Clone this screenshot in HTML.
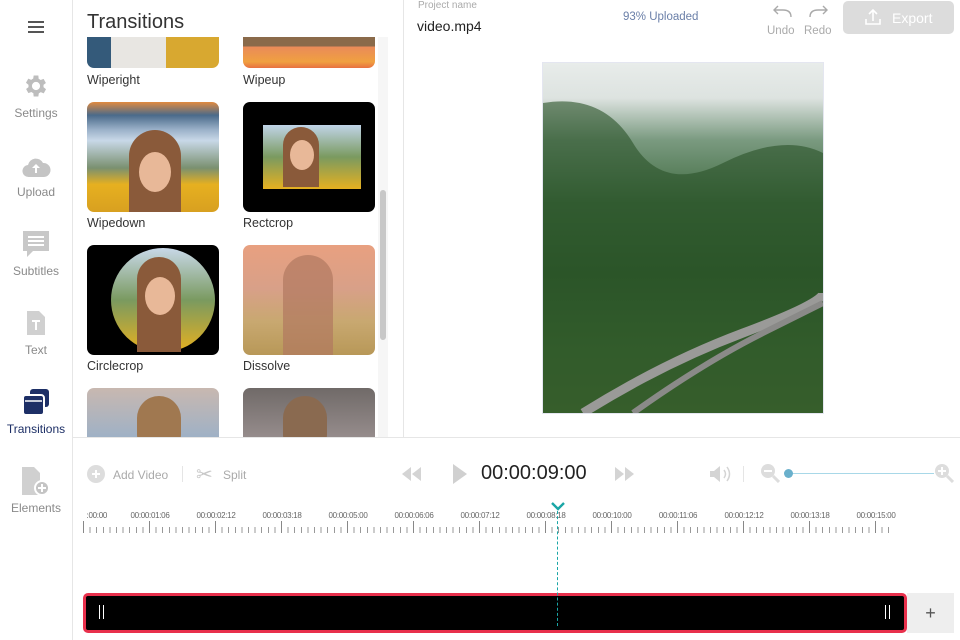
<!DOCTYPE html>
<html><head><meta charset="utf-8"><style>
*{margin:0;padding:0;box-sizing:border-box}
body{width:960px;height:640px;overflow:hidden;background:#fff;font-family:"Liberation Sans",sans-serif;position:relative;color:#222}
.abs{position:absolute}
.side{left:0;top:0;width:73px;height:640px;border-right:1px solid #e6e6e6;background:#fff}
.si{position:absolute;left:0;width:72px;text-align:center;font-size:12px;color:#8a8a8a}
.thumb{position:absolute;width:132px;height:110px;border-radius:7px;overflow:hidden}
.lbl{position:absolute;font-size:12.5px;color:#333}
.tl{position:absolute;top:511px;font-size:8px;color:#666;width:60px;text-align:center;letter-spacing:-0.3px}
</style></head><body>
<div class="abs side">
 <div class="abs" style="left:28px;top:21px;width:16px;height:2px;background:#555;box-shadow:0 5px 0 #555,0 10px 0 #555"></div>
 <svg class="abs" style="left:22px;top:72px" width="28" height="28" viewBox="0 0 24 24"><path fill="#bdbdbd" d="M19.4 13a7.5 7.5 0 000-2l2.1-1.6-2-3.5-2.5 1a7 7 0 00-1.7-1L15 3h-4l-.4 2.7a7 7 0 00-1.7 1l-2.5-1-2 3.5L6.6 11a7.5 7.5 0 000 2l-2.1 1.6 2 3.5 2.5-1a7 7 0 001.7 1L11 21h4l.4-2.7a7 7 0 001.7-1l2.5 1 2-3.5zM13 15.5a3.5 3.5 0 110-7 3.5 3.5 0 010 7z" transform="translate(-1 0)"/></svg>
 <div class="si" style="top:106px">Settings</div>
 <svg class="abs" style="left:21px;top:155px" width="30" height="24" viewBox="0 0 30 24"><path fill="#c4c4c4" d="M8 22a6 6 0 01-1-12 8 8 0 0115-2 6.5 6.5 0 011 14z"/><path fill="#fff" d="M15 9l-4 4h3v5h2v-5h3z"/></svg>
 <div class="si" style="top:185px">Upload</div>
 <svg class="abs" style="left:21px;top:229px" width="30" height="30" viewBox="0 0 30 30"><path fill="#c8c8c8" d="M2 2h26v20H12l-6 6v-6H2z"/><path stroke="#fff" stroke-width="2" d="M7 8h16M7 12h16M7 16h16"/></svg>
 <div class="si" style="top:264px">Subtitles</div>
 <svg class="abs" style="left:27px;top:311px" width="18" height="24" viewBox="0 0 18 24"><path fill="#d0d0d0" d="M0 0h12l6 6v18H0z"/><path stroke="#fff" stroke-width="2" d="M5 10h8M9 10v9"/></svg>
 <div class="si" style="top:343px">Text</div>
 <svg class="abs" style="left:22px;top:388px" width="28" height="28" viewBox="0 0 28 28"><rect x="8" y="1" width="19" height="18" rx="3" fill="#1d2f66"/><rect x="1" y="7" width="21" height="20" rx="3" fill="#1d2f66" stroke="#fff" stroke-width="2"/><path stroke="#fff" stroke-width="1.5" d="M3 13h17"/></svg>
 <div class="si" style="top:422px;color:#1d2f66">Transitions</div>
 <svg class="abs" style="left:22px;top:467px" width="30" height="30" viewBox="0 0 30 30"><path fill="#d0d0d0" d="M0 0h12l6 6v22H0z"/><circle cx="20" cy="21" r="7" fill="#c4c4c4" stroke="#fff" stroke-width="2"/><path stroke="#fff" stroke-width="2" d="M16 21h8M20 17v8"/></svg>
 <div class="si" style="top:501px">Elements</div>
</div>
<div class="abs" style="left:73px;top:0;width:331px;height:437px;border-right:1px solid #e6e6e6;overflow:hidden">
 <div class="abs" style="left:14px;top:11px;font-size:20px;color:#333">Transitions</div>
 <div class="abs" style="left:14px;top:37px;width:132px;height:31px;overflow:hidden;border-radius:0 0 7px 7px;background:linear-gradient(90deg,#345a7a 0 18%,#e8e6e2 18% 60%,#d8a830 60%)"></div>
 <div class="abs" style="left:170px;top:37px;width:132px;height:31px;overflow:hidden;border-radius:0 0 7px 7px;background:linear-gradient(180deg,#8a6a4a 0 30%,#e98a5a 30%,#f0a040 80%,#e87040)"></div>
 <div class="lbl" style="left:14px;top:73px">Wiperight</div><div class="lbl" style="left:170px;top:73px">Wipeup</div>
 <div class="thumb" style="left:14px;top:102px;background:linear-gradient(180deg,#e08a40 0,#4a6a8a 12%,#9ab0c8 25%,#c8d8e8 35%,#7a9070 60%,#e6b020 75%,#d8a020)"><div class="abs" style="left:42px;top:28px;width:52px;height:82px;border-radius:26px 26px 0 0;background:#8a5a3a"></div><div class="abs" style="left:52px;top:50px;width:32px;height:40px;border-radius:50%;background:#e8b898"></div></div>
 <div class="thumb" style="left:170px;top:102px;background:#000"><div class="abs" style="left:20px;top:23px;width:98px;height:64px;background:linear-gradient(180deg,#c0d4e8,#7a9a60 50%,#e6b020)"></div><div class="abs" style="left:40px;top:25px;width:36px;height:60px;border-radius:18px 18px 0 0;background:#8a5a3a"></div><div class="abs" style="left:47px;top:38px;width:24px;height:30px;border-radius:50%;background:#e8b898"></div></div>
 <div class="lbl" style="left:14px;top:216px">Wipedown</div><div class="lbl" style="left:170px;top:216px">Rectcrop</div>
 <div class="thumb" style="left:14px;top:245px;background:#000"><div class="abs" style="left:24px;top:3px;width:104px;height:104px;border-radius:50%;background:linear-gradient(180deg,#c8d8e8,#7a9a60 50%,#e6b020)"></div><div class="abs" style="left:50px;top:12px;width:44px;height:95px;border-radius:22px 22px 0 0;background:#8a5a3a"></div><div class="abs" style="left:58px;top:32px;width:30px;height:38px;border-radius:50%;background:#e8b898"></div></div>
 <div class="thumb" style="left:170px;top:245px;background:linear-gradient(180deg,#e8a080,#d8a088 40%,#c8a870 70%,#b89858)"><div class="abs" style="left:40px;top:10px;width:50px;height:100px;border-radius:25px 25px 0 0;background:#b07860;opacity:.7"></div></div>
 <div class="lbl" style="left:14px;top:359px">Circlecrop</div><div class="lbl" style="left:170px;top:359px">Dissolve</div>
 <div class="thumb" style="left:14px;top:388px;background:linear-gradient(180deg,#c8b8b0,#9ab0c8 50%,#b09080)"><div class="abs" style="left:50px;top:8px;width:44px;height:60px;border-radius:22px;background:#a07850"></div></div>
 <div class="thumb" style="left:170px;top:388px;background:linear-gradient(180deg,#706a68,#9a9090 50%,#585050)"><div class="abs" style="left:40px;top:8px;width:44px;height:60px;border-radius:22px;background:#8a6a50"></div></div>
 <div class="abs" style="left:305px;top:37px;width:10px;height:400px;background:#f6f6f6"></div>
 <div class="abs" style="left:307px;top:190px;width:6px;height:150px;border-radius:3px;background:#c8c8c8"></div>
</div>
<div class="abs" style="left:418px;top:0;font-size:10px;color:#aaa">Project name</div>
<div class="abs" style="left:417px;top:18px;font-size:14px;color:#222">video.mp4</div>
<div class="abs" style="left:623px;top:11px;font-size:11.5px;color:#6a7fa8">93% Uploaded</div>
<svg class="abs" style="left:771px;top:5px" width="22" height="14" viewBox="0 0 22 14"><path d="M20 12c0-5-3-7-8-7H3M7 1L3 5l4 4" fill="none" stroke="#aaa" stroke-width="1.4"/></svg>
<svg class="abs" style="left:808px;top:5px" width="22" height="14" viewBox="0 0 22 14"><path d="M2 12c0-5 3-7 8-7h9M15 1l4 4-4 4" fill="none" stroke="#aaa" stroke-width="1.4"/></svg>
<div class="abs" style="left:767px;top:25px;font-size:11.5px;color:#aaa">Undo</div>
<div class="abs" style="left:804px;top:25px;font-size:11.5px;color:#aaa">Redo</div>
<div class="abs" style="left:843px;top:1px;width:111px;height:33px;border-radius:5px;background:#dcdcdc"></div>
<svg class="abs" style="left:864px;top:8px" width="18" height="18" viewBox="0 0 18 18"><path d="M9 13V2M5 6l4-4 4 4M2 11v5h14v-5" fill="none" stroke="#fff" stroke-width="1.6"/></svg>
<div class="abs" style="left:892px;top:10px;font-size:14px;color:#fff">Export</div>
<div class="abs" style="left:542px;top:62px;width:282px;height:352px;border:1px solid #e4e6f0;background:linear-gradient(180deg,#e8ecea 0,#dde3e0 10%,#7a9a80 22%,#3e6a3e 40%,#2e5a2a 60%,#3e6a30 80%,#4a7030)"><svg class="abs" style="left:0;top:0" width="280" height="350"><path d="M0 40 Q60 30 90 80 T180 100 T280 90 V350 H0Z" fill="#2a5228" opacity=".6"/><path d="M40 350 Q120 300 200 270 T280 230" stroke="#9a9a98" stroke-width="9" fill="none"/><path d="M90 350 Q160 300 220 270 T280 240" stroke="#8a8a88" stroke-width="6" fill="none"/></svg></div>
<div class="abs" style="left:73px;top:437px;width:887px;height:1px;background:#e6e6e6"></div>
<svg class="abs" style="left:87px;top:465px" width="18" height="18"><circle cx="9" cy="9" r="9" fill="#ddd"/><path d="M5 9h8M9 5v8" stroke="#fff" stroke-width="2"/></svg>
<div class="abs" style="left:113px;top:468px;font-size:12px;color:#aaa">Add Video</div>
<div class="abs" style="left:182px;top:466px;width:1px;height:16px;background:#e5e5e5"></div>
<div class="abs" style="left:196px;top:462px;font-size:20px;color:#c8c8c8">✂</div>
<div class="abs" style="left:223px;top:468px;font-size:12px;color:#aaa">Split</div>
<svg class="abs" style="left:400px;top:465px" width="22" height="18"><path d="M11 2L2 9l9 7zM21 2l-9 7 9 7z" fill="#d4d4d4"/></svg>
<svg class="abs" style="left:451px;top:462px" width="18" height="24"><path d="M2 2l14 10L2 22z" fill="#d0d0d0"/></svg>
<div class="abs" style="left:481px;top:462px;font-size:20px;color:#222">00:00:09:00</div>
<svg class="abs" style="left:614px;top:465px" width="22" height="18"><path d="M1 2l9 7-9 7zM11 2l9 7-9 7z" fill="#d4d4d4"/></svg>
<svg class="abs" style="left:708px;top:464px" width="26" height="20"><path d="M2 7h4l6-5v16l-6-5H2z" fill="#d4d4d4"/><path d="M16 6q3 4 0 8M19 3q5 7 0 14" stroke="#d4d4d4" stroke-width="1.5" fill="none"/></svg>
<div class="abs" style="left:743px;top:466px;width:1px;height:16px;background:#e5e5e5"></div>
<svg class="abs" style="left:760px;top:463px" width="20" height="20"><circle cx="8" cy="8" r="7" fill="#ddd"/><path d="M13 13l6 6" stroke="#ddd" stroke-width="3"/><path d="M4 8h8" stroke="#fff" stroke-width="2"/></svg>
<div class="abs" style="left:789px;top:473px;width:145px;height:1px;background:#a8d8e8"></div>
<div class="abs" style="left:784px;top:469px;width:9px;height:9px;border-radius:50%;background:#6ab0cc"></div>
<svg class="abs" style="left:934px;top:463px" width="20" height="20"><circle cx="8" cy="8" r="7" fill="#ddd"/><path d="M13 13l6 6" stroke="#ddd" stroke-width="3"/><path d="M4 8h8M8 4v8" stroke="#fff" stroke-width="2"/></svg>
<div class="tl" style="left:65px;text-align:right;width:42px">:00:00</div>
<div class="tl" style="left:120px">00:00:01:06</div><div class="tl" style="left:186px">00:00:02:12</div><div class="tl" style="left:252px">00:00:03:18</div><div class="tl" style="left:318px">00:00:05:00</div><div class="tl" style="left:384px">00:00:06:06</div><div class="tl" style="left:450px">00:00:07:12</div><div class="tl" style="left:516px">00:00:08:18</div><div class="tl" style="left:582px">00:00:10:00</div><div class="tl" style="left:648px">00:00:11:06</div><div class="tl" style="left:714px">00:00:12:12</div><div class="tl" style="left:780px">00:00:13:18</div><div class="tl" style="left:846px">00:00:15:00</div>
<div class="abs" style="left:83px;top:527px;width:810px;height:6px;background:repeating-linear-gradient(90deg,#999 0 1px,transparent 1px 6.6px)"></div>
<div class="abs" style="left:83px;top:521px;width:810px;height:12px;background:repeating-linear-gradient(90deg,#888 0 1px,transparent 1px 66px)"></div>
<svg class="abs" style="left:550px;top:501px" width="16" height="10"><path d="M2 2l6 6 6-6" stroke="#1aa6a6" stroke-width="2.4" fill="none"/></svg>
<div class="abs" style="left:83px;top:593px;width:824px;height:40px;border:3px solid #e8304c;border-radius:5px;background:#000"></div>
<div class="abs" style="left:557px;top:511px;width:0;height:115px;border-left:1px dashed #1aa6a6"></div>
<div class="abs" style="left:99px;top:605px;width:5px;height:14px;border-left:1.5px solid #fff;border-right:1.5px solid #fff"></div>
<div class="abs" style="left:885px;top:605px;width:5px;height:14px;border-left:1.5px solid #fff;border-right:1.5px solid #fff"></div>
<div class="abs" style="left:907px;top:593px;width:47px;height:40px;background:#eee;text-align:center;line-height:40px;font-size:18px;color:#555">+</div>
</body></html>
